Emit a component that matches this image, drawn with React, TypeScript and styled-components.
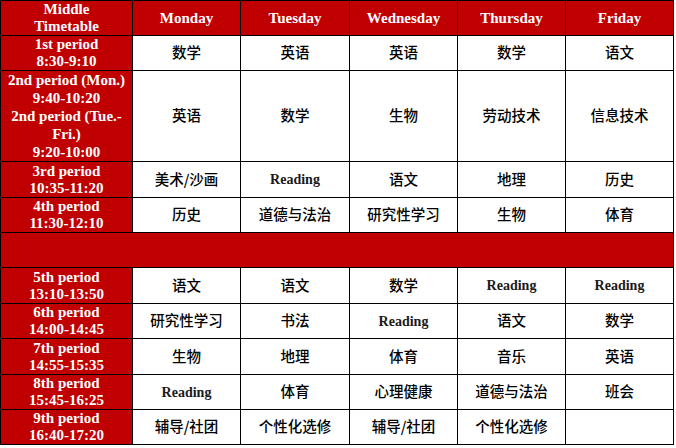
import React from "react";
import styled, { createGlobalStyle } from "styled-components";

const GlobalStyle = createGlobalStyle`
  html, body {
    margin: 0;
    padding: 0;
    background: #ffffff;
  }
`;

const RED = "#c00000";

const Table = styled.table`
  border-collapse: collapse;
  table-layout: fixed;
  width: 673px;
  font-family: "Liberation Serif", "Times New Roman", serif;

  td, th {
    border: 1px solid #000;
    padding: 0 2px;
    text-align: center;
    vertical-align: middle;
    overflow: hidden;
  }
`;

const Col = styled.col<{ $w: number }>`
  width: ${(p) => p.$w}px;
`;

const Row = styled.tr<{ $h: number }>`
  height: ${(p) => p.$h}px;
`;

const HeadCell = styled.th`
  background: ${RED};
  color: #fff;
  font-weight: bold;
  font-size: 15px;
  line-height: 17px;
`;

const PeriodCell = styled.td<{ $lh?: number }>`
  background: ${RED};
  color: #fff;
  font-weight: bold;
  font-size: 15px;
  line-height: ${(p) => p.$lh ?? 17}px;
`;

const BreakCell = styled.td`
  background: ${RED};
`;

const SubjectCell = styled.td<{ $latin?: boolean }>`
  background: #fff;
  line-height: 17px;
  font-family: ${(p) =>
    p.$latin
      ? `"Liberation Serif", "Times New Roman", serif`
      : `"Noto Sans CJK SC", "Noto Sans", sans-serif`};
  font-weight: ${(p) => (p.$latin ? 700 : 500)};
  font-size: ${(p) => (p.$latin ? "14px" : "14.5px")};
  color: ${(p) => (p.$latin ? "#1a1a1a" : "#000")};
  td& {
    padding-bottom: ${(p) => (p.$latin ? "0" : "3px")};
  }
`;

const colWidths = [132, 108, 109, 108, 108, 108];
const days = ["Monday", "Tuesday", "Wednesday", "Thursday", "Friday"];

type Period = {
  label: React.ReactNode;
  h: number;
  lh?: number;
  subjects: string[];
};

const morning: Period[] = [
  { label: <>1st period<br />8:30-9:10</>, h: 35, subjects: ["数学", "英语", "英语", "数学", "语文"] },
  {
    label: (
      <>
        2nd period (Mon.)<br />9:40-10:20<br />2nd period (Tue.-Fri.)<br />9:20-10:00
      </>
    ),
    h: 90,
    lh: 18,
    subjects: ["英语", "数学", "生物", "劳动技术", "信息技术"],
  },
  { label: <>3rd period<br />10:35-11:20</>, h: 36, subjects: ["美术/沙画", "Reading", "语文", "地理", "历史"] },
  { label: <>4th period<br />11:30-12:10</>, h: 35, subjects: ["历史", "道德与法治", "研究性学习", "生物", "体育"] },
];

const afternoon: Period[] = [
  { label: <>5th period<br />13:10-13:50</>, h: 36, subjects: ["语文", "语文", "数学", "Reading", "Reading"] },
  { label: <>6th period<br />14:00-14:45</>, h: 35, subjects: ["研究性学习", "书法", "Reading", "语文", "数学"] },
  { label: <>7th period<br />14:55-15:35</>, h: 36, subjects: ["生物", "地理", "体育", "音乐", "英语"] },
  { label: <>8th period<br />15:45-16:25</>, h: 35, subjects: ["Reading", "体育", "心理健康", "道德与法治", "班会"] },
  { label: <>9th period<br />16:40-17:20</>, h: 35, subjects: ["辅导/社团", "个性化选修", "辅导/社团", "个性化选修", ""] },
];

function PeriodRow({ p }: { p: Period }) {
  return (
    <Row $h={p.h}>
      <PeriodCell $lh={p.lh}>{p.label}</PeriodCell>
      {p.subjects.map((s, i) => (
        <SubjectCell key={i} $latin={/^[A-Za-z]/.test(s)}>
          {s}
        </SubjectCell>
      ))}
    </Row>
  );
}

export default function App() {
  return (
    <>
      <GlobalStyle />
      <Table>
        <colgroup>
          {colWidths.map((w, i) => (
            <Col key={i} $w={w} />
          ))}
        </colgroup>
        <tbody>
          <Row $h={35}>
            <HeadCell>
              Middle
              <br />
              Timetable
            </HeadCell>
            {days.map((d) => (
              <HeadCell key={d}>{d}</HeadCell>
            ))}
          </Row>
          {morning.map((p, i) => (
            <PeriodRow key={i} p={p} />
          ))}
          <Row $h={35}>
            <BreakCell colSpan={6} />
          </Row>
          {afternoon.map((p, i) => (
            <PeriodRow key={i} p={p} />
          ))}
        </tbody>
      </Table>
    </>
  );
}
